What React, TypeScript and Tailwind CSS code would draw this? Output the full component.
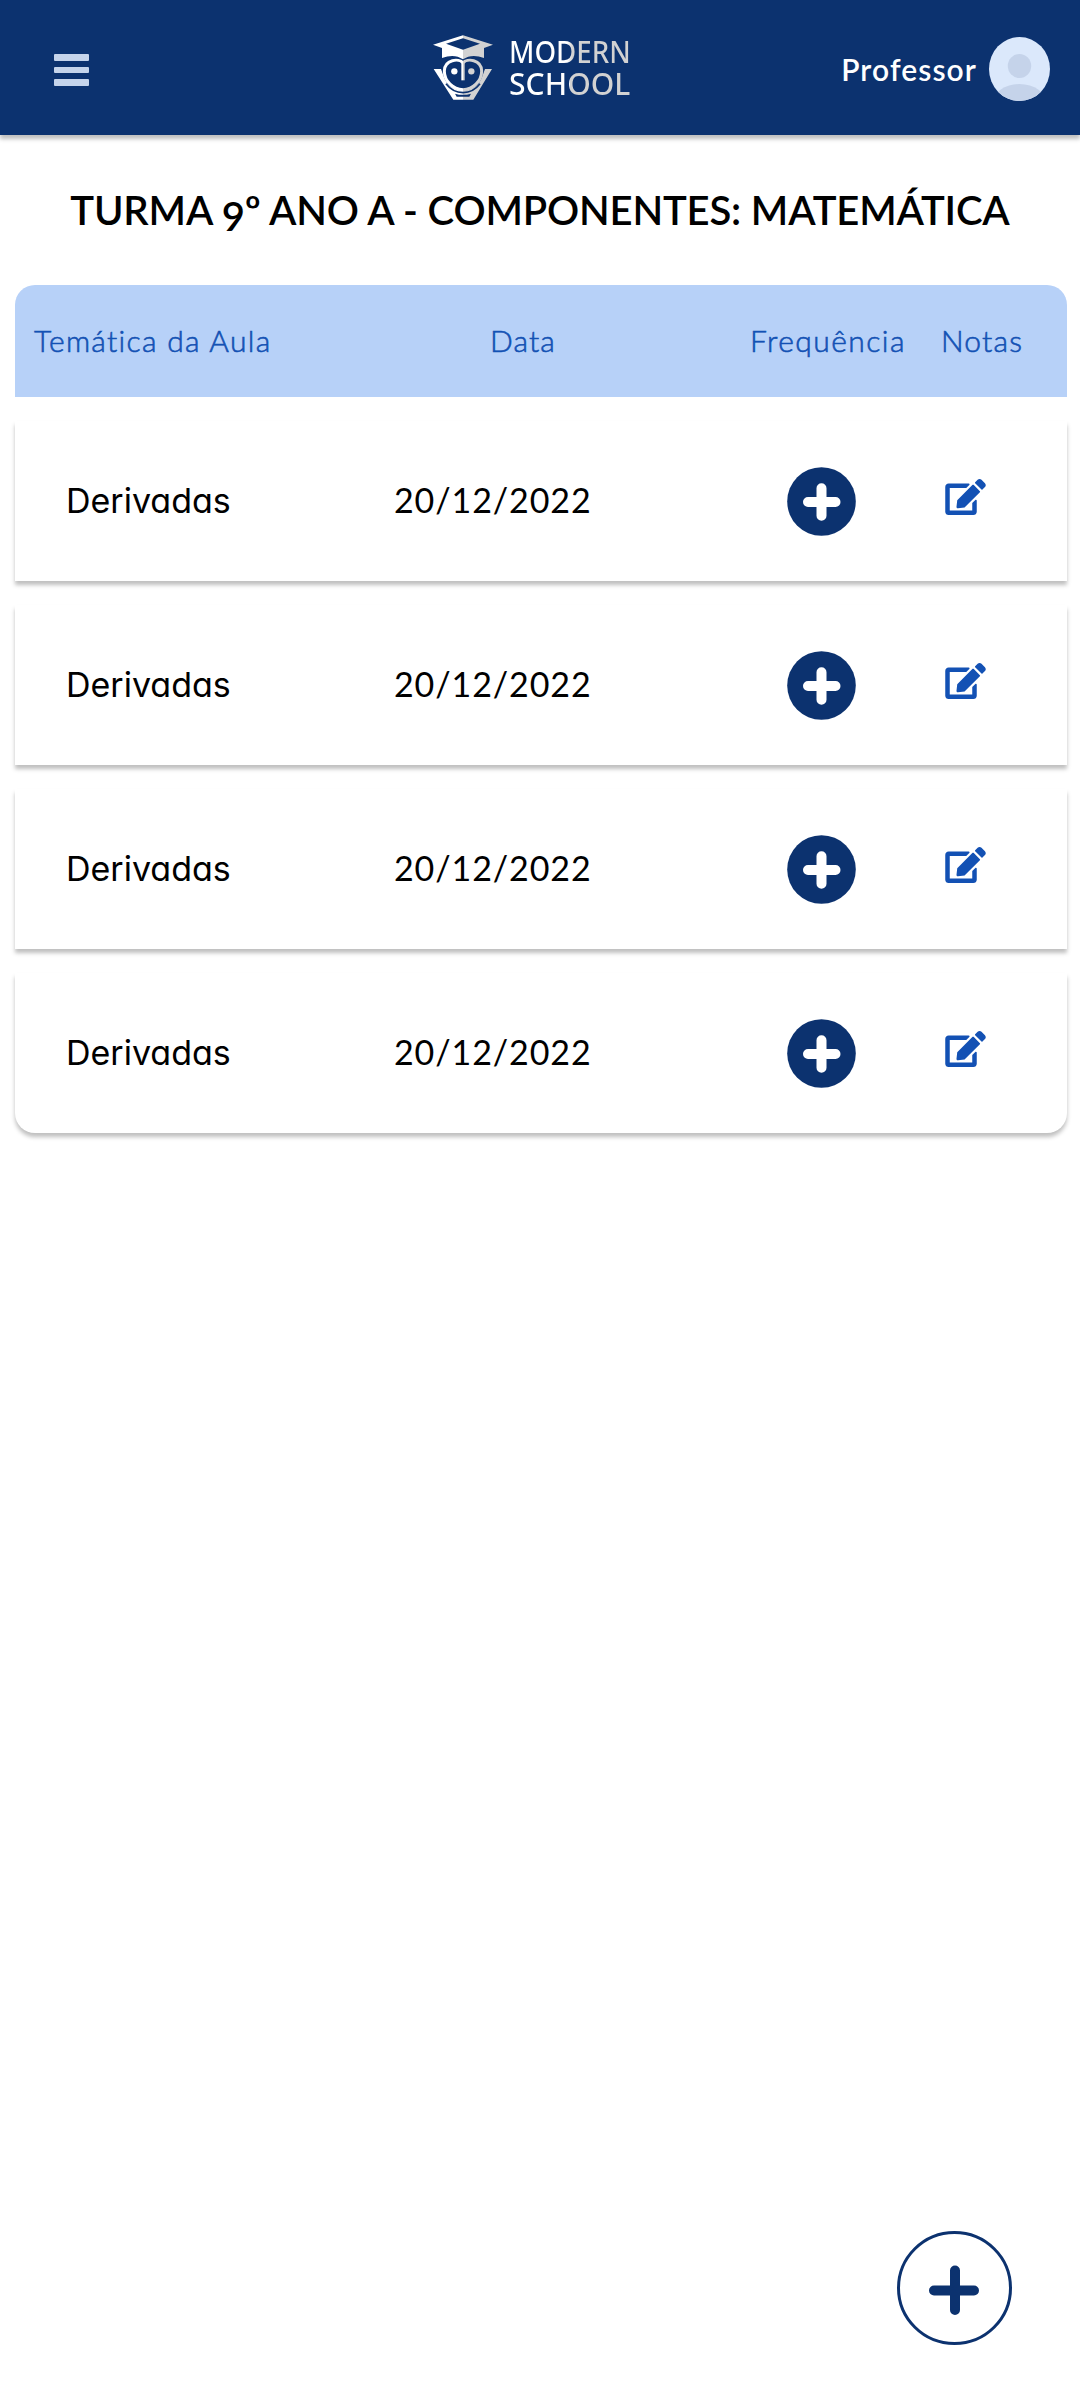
import { FaEdit } from "react-icons/fa";

const lessons = [
  { id: 1, topic: "Derivadas", date: "20/12/2022" },
  { id: 2, topic: "Derivadas", date: "20/12/2022" },
  { id: 3, topic: "Derivadas", date: "20/12/2022" },
  { id: 4, topic: "Derivadas", date: "20/12/2022" },
];

function OwlMark() {
  return (
    <svg className="h-[66px] w-[60px] shrink-0" viewBox="39 44 180 198" fill="none">
      <defs>
        <linearGradient id="mark" gradientUnits="userSpaceOnUse" x1="39" y1="0" x2="219" y2="0">
          <stop offset="0" stopColor="#fff" />
          <stop offset="0.5" stopColor="#fff" />
          <stop offset="0.5" stopColor="#d2d2d2" />
          <stop offset="1" stopColor="#d2d2d2" />
        </linearGradient>
      </defs>
      <path
        fill="url(#mark)"
        fillRule="evenodd"
        d="M39 73L129 45L219 73L192 83V113Q155 99 129 117Q103 99 66 113V83ZM78 70L129 88L180 70L129 54Z"
      />
      <path fill="url(#mark)" d="M41 146H63L74 176Q86 206 129 212Q172 206 184 176L195 146H216L160 238H100Z" />
      <path
        fill="#0c326f"
        stroke="url(#mark)"
        strokeWidth="9"
        d="M129 127C117 114 74 116 73 152C73 184 100 206 129 208C158 206 185 184 185 152C184 116 141 114 129 127Z"
      />
      <path stroke="#0c326f" strokeWidth="5" d="M78 190Q98 216 129 217Q160 216 180 190" />
      <path fill="#0c326f" d="M105 220Q129 227 153 220L148 229H110Z" />
      <path fill="url(#mark)" d="M124 122H134V180H124Z" />
      <circle cx="103" cy="153" r="9.5" fill="#fff" />
      <circle cx="154" cy="153" r="9.5" fill="#d2d2d2" />
    </svg>
  );
}

function Header() {
  return (
    <header className="flex h-[135px] items-start bg-[#0c326f] shadow-[0_4px_4px_rgba(0,0,0,0.25)]">
      <button aria-label="Menu" className="mt-[54px] ml-[54px] flex w-[35px] flex-col gap-[6px]">
        <span className="h-[6.5px] rounded-[1px] bg-[#c5d4eb]" />
        <span className="h-[6.5px] rounded-[1px] bg-[#c5d4eb]" />
        <span className="h-[6.5px] rounded-[1px] bg-[#c5d4eb]" />
      </button>
      <div className="mt-[35px] ml-[344px] flex w-[210px]">
        <OwlMark />
        <div className="ml-[16px] flex flex-col font-['Noto_Sans',sans-serif] text-[31px] leading-[31px] font-medium whitespace-nowrap">
          <span className="mt-[1px] w-[136px] origin-left scale-x-[0.893] bg-[linear-gradient(90deg,#fff_48%,#d2d2d2_52%)] bg-clip-text text-transparent">
            MODERN
          </span>
          <span className="mt-[1px] w-[126px] origin-left scale-x-[0.97] bg-[linear-gradient(90deg,#fff_50%,#d2d2d2_50%)] bg-clip-text text-transparent">
            SCHOOL
          </span>
        </div>
      </div>
      <div className="mt-[37px] mr-[30px] ml-auto flex h-16 items-center">
        <span className="mr-[12px] font-['Lato',sans-serif] text-[30px] leading-[40px] font-semibold tracking-[1.1px] text-white">
          Professor
        </span>
        <svg className="h-16 w-[61px]" viewBox="0 0 61 64">
          <clipPath id="avatar">
            <ellipse cx="30.5" cy="32" rx="30.5" ry="32" />
          </clipPath>
          <g clipPath="url(#avatar)">
            <rect width="61" height="64" fill="#dbe8fb" />
            <ellipse cx="30.5" cy="29" rx="11.7" ry="12" fill="#c5d3ea" />
            <ellipse cx="30.5" cy="67" rx="27" ry="20" fill="#c5d3ea" />
          </g>
        </svg>
      </div>
    </header>
  );
}

export default function App() {
  return (
    <div className="flex min-h-[2400px] flex-col bg-white">
      <Header />
      <h1 className="mt-[50px] text-center font-['Lato',sans-serif] text-[40px] leading-[50px] font-semibold tracking-[-0.17px] whitespace-nowrap text-black">
        TURMA <span className="relative top-[6px]">9</span>º ANO A - COMPONENTES: MATEMÁTICA
      </h1>

      <main className="mt-[50px] ml-[15px] flex w-[1052px] flex-col gap-6">
        <div className="flex h-[112px] items-center rounded-t-[20px] bg-[#b7d1f8] pb-[2px] font-['Lato',sans-serif] text-[30px] font-light text-[#1351b4] [-webkit-text-stroke:0.6px_#1351b4]">
          <span className="ml-[19px] w-[456px] tracking-[1.3px]">Temática da Aula</span>
          <span className="w-[260px] tracking-[1.1px]">Data</span>
          <span className="w-[191px] tracking-[1.45px]">Frequência</span>
          <span className="tracking-[1.2px]">Notas</span>
        </div>

        {lessons.map((lesson) => (
          <div
            key={lesson.id}
            className="flex h-[160px] items-center bg-white text-[34px] text-black shadow-[0_4px_4px_rgba(0,0,0,0.25)] last:rounded-b-[20px]"
          >
            <span className="ml-[51px] w-[328px] pb-[2px] font-['Inter',sans-serif] [font-feature-settings:'cv11']">
              {lesson.topic}
            </span>
            <span className="w-[393px] shrink-0 pb-[3px] font-['Lato',sans-serif] tracking-[0.9px]">{lesson.date}</span>
            <button aria-label="Registrar frequência" className="w-[158px]">
              <svg className="h-[69px] w-[69px]" viewBox="0 0 69 69">
                <circle cx="34.5" cy="34.5" r="34.3" fill="#0c326f" />
                <path d="M34.5 21.2V48.8M21 35H48.5" stroke="#fff" strokeWidth="10" strokeLinecap="round" />
              </svg>
            </button>
            <button aria-label="Editar notas" className="-mt-2">
              <FaEdit className="h-9 w-[41px] text-[#1351b4]" />
            </button>
          </div>
        ))}
      </main>

      <button aria-label="Adicionar aula" className="mt-auto mr-[68px] mb-[55px] self-end">
        <svg className="h-[114px] w-[115px]" viewBox="0 0 115 114" fill="none" stroke="#0c326f">
          <ellipse cx="57.5" cy="57" rx="56" ry="55.5" strokeWidth="3" />
          <path d="M58 39.5V79M37 59.5H77" strokeWidth="10" strokeLinecap="round" />
        </svg>
      </button>
    </div>
  );
}
